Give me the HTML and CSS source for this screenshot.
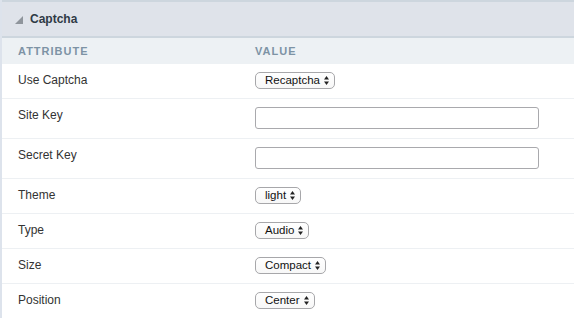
FILE: index.html
```html
<!DOCTYPE html>
<html>
<head>
  <title>Captcha Settings</title>
  <meta charset="utf-8">
  <link rel="stylesheet" href="styles.css">
</head>
<body>
  <div class="panel">
    <div class="panel-title">
      <svg class="toggle" width="8" height="8" viewBox="0 0 8 8"><polygon points="8,0 8,8 0,8" fill="#8f959c"/></svg>
      <span>Captcha</span>
    </div>
    <table class="attr-table">
      <thead>
        <tr>
          <th class="col-attr">Attribute</th>
          <th>Value</th>
        </tr>
      </thead>
      <tbody>
        <tr>
          <td class="col-attr">Use Captcha</td>
          <td><span class="select">Recaptcha<svg width="5" height="9" viewBox="0 0 5 9"><polygon points="2.5,0 5,3.5 0,3.5" fill="#222"/><polygon points="0,5.5 5,5.5 2.5,9" fill="#222"/></svg></span></td>
        </tr>
        <tr class="input-row">
          <td class="col-attr">Site Key</td>
          <td><input class="text-input" type="text"></td>
        </tr>
        <tr class="input-row">
          <td class="col-attr">Secret Key</td>
          <td><input class="text-input" type="text"></td>
        </tr>
        <tr>
          <td class="col-attr">Theme</td>
          <td><span class="select">light<svg width="5" height="9" viewBox="0 0 5 9"><polygon points="2.5,0 5,3.5 0,3.5" fill="#222"/><polygon points="0,5.5 5,5.5 2.5,9" fill="#222"/></svg></span></td>
        </tr>
        <tr>
          <td class="col-attr">Type</td>
          <td><span class="select">Audio<svg width="5" height="9" viewBox="0 0 5 9"><polygon points="2.5,0 5,3.5 0,3.5" fill="#222"/><polygon points="0,5.5 5,5.5 2.5,9" fill="#222"/></svg></span></td>
        </tr>
        <tr>
          <td class="col-attr">Size</td>
          <td><span class="select">Compact<svg width="5" height="9" viewBox="0 0 5 9"><polygon points="2.5,0 5,3.5 0,3.5" fill="#222"/><polygon points="0,5.5 5,5.5 2.5,9" fill="#222"/></svg></span></td>
        </tr>
        <tr>
          <td class="col-attr">Position</td>
          <td><span class="select">Center<svg width="5" height="9" viewBox="0 0 5 9"><polygon points="2.5,0 5,3.5 0,3.5" fill="#222"/><polygon points="0,5.5 5,5.5 2.5,9" fill="#222"/></svg></span></td>
        </tr>
      </tbody>
    </table>
  </div>
</body>
</html>
```

FILE: styles.css
```css
body {
  margin: 0;
  background: #fff;
  width: 574px;
  height: 318px;
  overflow: hidden;
  font-family: 'Liberation Sans', Arial, sans-serif;
}

.panel {
  border-left: 2px solid #dde3ec;
  min-height: 318px;
}

.panel-title {
  display: flex;
  align-items: center;
  gap: 7px;
  height: 34px;
  padding-left: 13px;
  background: #dfe3ea;
  border-top: 2px solid #cdd6de;
  border-bottom: 2px solid #cdd6de;
  font-size: 12px;
  font-weight: bold;
  color: #2f3a45;
}

.toggle {
  margin-top: 1px;
}

.attr-table {
  width: 100%;
  border-collapse: collapse;
}

.attr-table th {
  height: 26px;
  padding: 0;
  background: #edf1f4;
  text-align: left;
  font-size: 11px;
  font-weight: bold;
  letter-spacing: 1px;
  text-transform: uppercase;
  color: #7d93a5;
}

.attr-table td {
  padding: 8px 0 9px;
  vertical-align: top;
  font-size: 12px;
  color: #333;
  border-bottom: 1px solid #edf0f3;
  line-height: 17px;
}

.attr-table .col-attr {
  width: 237px;
  padding-left: 16px;
}

.select {
  display: inline-flex;
  align-items: center;
  gap: 4px;
  height: 15px;
  padding: 0 5px 0 9px;
  border: 1px solid #a7a7aa;
  border-radius: 5px;
  background: linear-gradient(#fff, #f7f7f7);
  font-size: 11.5px;
  line-height: 15px;
  color: #111;
}

.text-input {
  display: block;
  box-sizing: border-box;
  width: 284px;
  height: 22px;
  margin: 0;
  padding: 0 4px;
  border: 1px solid #a9a9ad;
  border-radius: 3px;
  background: #fff;
  font-family: inherit;
}
```
